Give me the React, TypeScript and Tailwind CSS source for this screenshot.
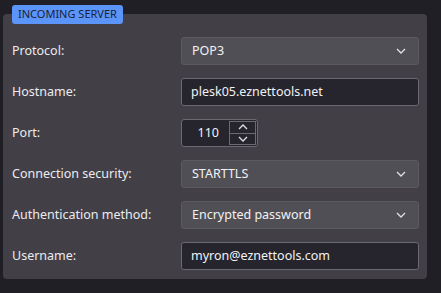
const FONT = "font-['Noto_Sans','Open_Sans',sans-serif]";

function Chevron({ up = false }: { up?: boolean }) {
  return (
    <svg className="h-[6px] w-[10px] text-[#e0e0e4]" viewBox="0 0 10 6" fill="none">
      <polyline
        points={up ? "1,5 5,1 9,5" : "1,1 5,5 9,1"}
        stroke="currentColor"
        strokeWidth={1.3}
      />
    </svg>
  );
}

function Select({ value }: { value: string }) {
  return (
    <div className="flex h-[28px] items-center justify-between rounded-[3px] border border-[#5b5a61] bg-[#504f56] pl-[10px] pr-[12px] text-[12.5px] text-[#f2f2f4]">
      <span>{value}</span>
      <Chevron />
    </div>
  );
}

function TextInput({ value }: { value: string }) {
  return (
    <div className="flex h-[28px] items-center rounded-[3px] border border-[#6b6a71] bg-[#26252d] pl-[9px] text-[12.5px] text-[#f2f2f4]">
      {value}
    </div>
  );
}

function PortField({ value }: { value: number }) {
  return (
    <div className="flex h-[28px] w-[77px] items-stretch rounded-[3px] border border-[#6b6a71] bg-[#26252d] p-[1px] text-[12.5px] text-[#f2f2f4]">
      <div className="flex flex-1 items-center justify-end pr-[10px]">{value}</div>
      <div className="flex w-[27px] flex-col border border-[#6b6a71]">
        <div className="flex flex-1 items-center justify-center border-b border-[#6b6a71]">
          <Chevron up />
        </div>
        <div className="flex flex-1 items-center justify-center">
          <Chevron />
        </div>
      </div>
    </div>
  );
}

const rows: { label: string; control: React.ReactNode }[] = [
  { label: "Protocol:", control: <Select value="POP3" /> },
  { label: "Hostname:", control: <TextInput value="plesk05.eznettools.net" /> },
  { label: "Port:", control: <PortField value={110} /> },
  { label: "Connection security:", control: <Select value="STARTTLS" /> },
  { label: "Authentication method:", control: <Select value="Encrypted password" /> },
  { label: "Username:", control: <TextInput value="myron@eznettools.com" /> },
];

export default function App() {
  return (
    <div className={`h-[293px] w-[441px] bg-[#201f25] pl-[3px] pt-[14px] ${FONT}`}>
      <div className="relative w-[424px] rounded-[4px] bg-[#423f47] pb-[9px] pl-[9px] pr-[8px] pt-[23px]">
        <div className="absolute left-[9px] top-[-9px] flex h-[19px] items-center rounded-[3px] bg-[#5b95f9] px-[6px] text-[11px] text-[#1b2233]">
          INCOMING SERVER
        </div>
        <div className="flex flex-col gap-[13px]">
          {rows.map((row) => (
            <div className="flex items-center" key={row.label}>
              <div className="w-[169px] text-[12.5px] text-[#ececee]">{row.label}</div>
              <div className="flex-1">{row.control}</div>
            </div>
          ))}
        </div>
      </div>
    </div>
  );
}
